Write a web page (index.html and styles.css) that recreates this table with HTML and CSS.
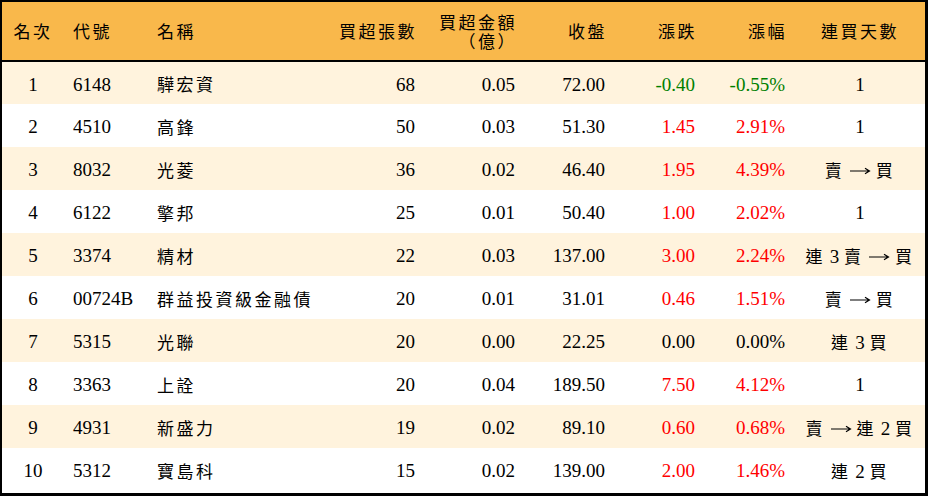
FILE: index.html
```html
<!DOCTYPE html>
<html lang="zh-Hant">
<head>
<meta charset="utf-8">
<title>買超排行</title>
<link rel="stylesheet" href="styles.css">
</head>
<body>
<div class="frame">
<table class="rank">
  <colgroup>
    <col class="c1"><col class="c2"><col class="c3"><col class="c4"><col class="c5"><col class="c6"><col class="c7"><col class="c8"><col class="c9">
  </colgroup>
  <thead>
    <tr>
      <th class="ctr"><span class="zh">名次</span></th>
      <th class="lft"><span class="zh">代號</span></th>
      <th class="lft"><span class="zh">名稱</span></th>
      <th class="rgt"><span class="zh">買超張數</span></th>
      <th class="rgt"><span class="zh line">買超金額</span><span class="zh line">（億）</span></th>
      <th class="rgt"><span class="zh">收盤</span></th>
      <th class="rgt"><span class="zh">漲跌</span></th>
      <th class="rgt"><span class="zh">漲幅</span></th>
      <th class="ctr"><span class="zh">連買天數</span></th>
    </tr>
  </thead>
  <tbody>
    <tr class="odd"><td class="ctr">1</td><td class="lft">6148</td><td class="lft"><span class="zh">驊宏資</span></td><td class="rgt">68</td><td class="rgt">0.05</td><td class="rgt">72.00</td><td class="rgt dn">-0.40</td><td class="rgt dn">-0.55%</td><td class="ctr">1</td></tr>
    <tr><td class="ctr">2</td><td class="lft">4510</td><td class="lft"><span class="zh">高鋒</span></td><td class="rgt">50</td><td class="rgt">0.03</td><td class="rgt">51.30</td><td class="rgt up">1.45</td><td class="rgt up">2.91%</td><td class="ctr">1</td></tr>
    <tr class="odd"><td class="ctr">3</td><td class="lft">8032</td><td class="lft"><span class="zh">光菱</span></td><td class="rgt">36</td><td class="rgt">0.02</td><td class="rgt">46.40</td><td class="rgt up">1.95</td><td class="rgt up">4.39%</td><td class="ctr"><span class="zh">賣</span> <svg class="arr" viewBox="0 0 22 10" aria-label="→"><path d="M1 5H20M16 2.2L20.5 5L16 7.8"/></svg> <span class="zh">買</span></td></tr>
    <tr><td class="ctr">4</td><td class="lft">6122</td><td class="lft"><span class="zh">擎邦</span></td><td class="rgt">25</td><td class="rgt">0.01</td><td class="rgt">50.40</td><td class="rgt up">1.00</td><td class="rgt up">2.02%</td><td class="ctr">1</td></tr>
    <tr class="odd"><td class="ctr">5</td><td class="lft">3374</td><td class="lft"><span class="zh">精材</span></td><td class="rgt">22</td><td class="rgt">0.03</td><td class="rgt">137.00</td><td class="rgt up">3.00</td><td class="rgt up">2.24%</td><td class="ctr"><span class="zh">連</span> 3 <span class="zh">賣</span> <svg class="arr" viewBox="0 0 22 10" aria-label="→"><path d="M1 5H20M16 2.2L20.5 5L16 7.8"/></svg> <span class="zh">買</span></td></tr>
    <tr><td class="ctr">6</td><td class="lft">00724B</td><td class="lft"><span class="zh">群益投資級金融債</span></td><td class="rgt">20</td><td class="rgt">0.01</td><td class="rgt">31.01</td><td class="rgt up">0.46</td><td class="rgt up">1.51%</td><td class="ctr"><span class="zh">賣</span> <svg class="arr" viewBox="0 0 22 10" aria-label="→"><path d="M1 5H20M16 2.2L20.5 5L16 7.8"/></svg> <span class="zh">買</span></td></tr>
    <tr class="odd"><td class="ctr">7</td><td class="lft">5315</td><td class="lft"><span class="zh">光聯</span></td><td class="rgt">20</td><td class="rgt">0.00</td><td class="rgt">22.25</td><td class="rgt">0.00</td><td class="rgt">0.00%</td><td class="ctr"><span class="zh">連</span> 3 <span class="zh">買</span></td></tr>
    <tr><td class="ctr">8</td><td class="lft">3363</td><td class="lft"><span class="zh">上詮</span></td><td class="rgt">20</td><td class="rgt">0.04</td><td class="rgt">189.50</td><td class="rgt up">7.50</td><td class="rgt up">4.12%</td><td class="ctr">1</td></tr>
    <tr class="odd"><td class="ctr">9</td><td class="lft">4931</td><td class="lft"><span class="zh">新盛力</span></td><td class="rgt">19</td><td class="rgt">0.02</td><td class="rgt">89.10</td><td class="rgt up">0.60</td><td class="rgt up">0.68%</td><td class="ctr"><span class="zh">賣</span> <svg class="arr" viewBox="0 0 22 10" aria-label="→"><path d="M1 5H20M16 2.2L20.5 5L16 7.8"/></svg> <span class="zh">連</span> 2 <span class="zh">買</span></td></tr>
    <tr><td class="ctr">10</td><td class="lft">5312</td><td class="lft"><span class="zh">寶島科</span></td><td class="rgt">15</td><td class="rgt">0.02</td><td class="rgt">139.00</td><td class="rgt up">2.00</td><td class="rgt up">1.46%</td><td class="ctr"><span class="zh">連</span> 2 <span class="zh">買</span></td></tr>
  </tbody>
</table>
</div>
</body>
</html>
```

FILE: styles.css
```css
html, body {
  margin: 0;
  padding: 0;
  background: #ffffff;
}

.frame {
  width: 928px;
  height: 496px;
  box-sizing: border-box;
  border-style: solid;
  border-color: #000000;
  border-width: 2px 3px 3px 2px;
  overflow: hidden;
}

.rank {
  width: 923px;
  border-collapse: collapse;
  table-layout: fixed;
  font-family: "Liberation Serif", "Noto Sans CJK TC", serif;
  font-size: 19px;
  color: #000000;
  text-spacing-trim: space-all;
}

.c1 { width: 62px; }
.c2 { width: 84px; }
.c3 { width: 182px; }
.c4 { width: 95px; }
.c5 { width: 100px; }
.c6 { width: 90px; }
.c7 { width: 90px; }
.c8 { width: 90px; }
.c9 { width: 130px; }

.rank th,
.rank td {
  padding: 0;
  white-space: nowrap;
  vertical-align: middle;
}

.rank thead tr {
  height: 59px;
  background: #f9b84b;
  border-bottom: 2px solid #000000;
}

.rank th {
  font-weight: normal;
  line-height: 19px;
}

.rank tbody tr {
  height: 43px;
  background: #ffffff;
}

.rank tbody tr.odd {
  background: #fff3dd;
}

.rank td {
  padding-top: 3px;
  line-height: 22px;
}

.zh {
  font-family: "Noto Sans CJK TC", sans-serif;
  font-size: 17px;
  letter-spacing: 2.5px;
}

.zh.line {
  display: block;
  line-height: 19px;
}

.arr {
  display: inline-block;
  width: 22px;
  height: 10px;
  vertical-align: 1px;
  fill: none;
  stroke: #000000;
  stroke-width: 1.2;
}

.ctr { text-align: center; }
.rank .lft { text-align: left; padding-left: 9px; }
.rank .rgt { text-align: right; padding-right: 10px; }
.rank th.rgt { padding-right: 8px; }

.up { color: #ff0000; }
.dn { color: #008000; }
```
